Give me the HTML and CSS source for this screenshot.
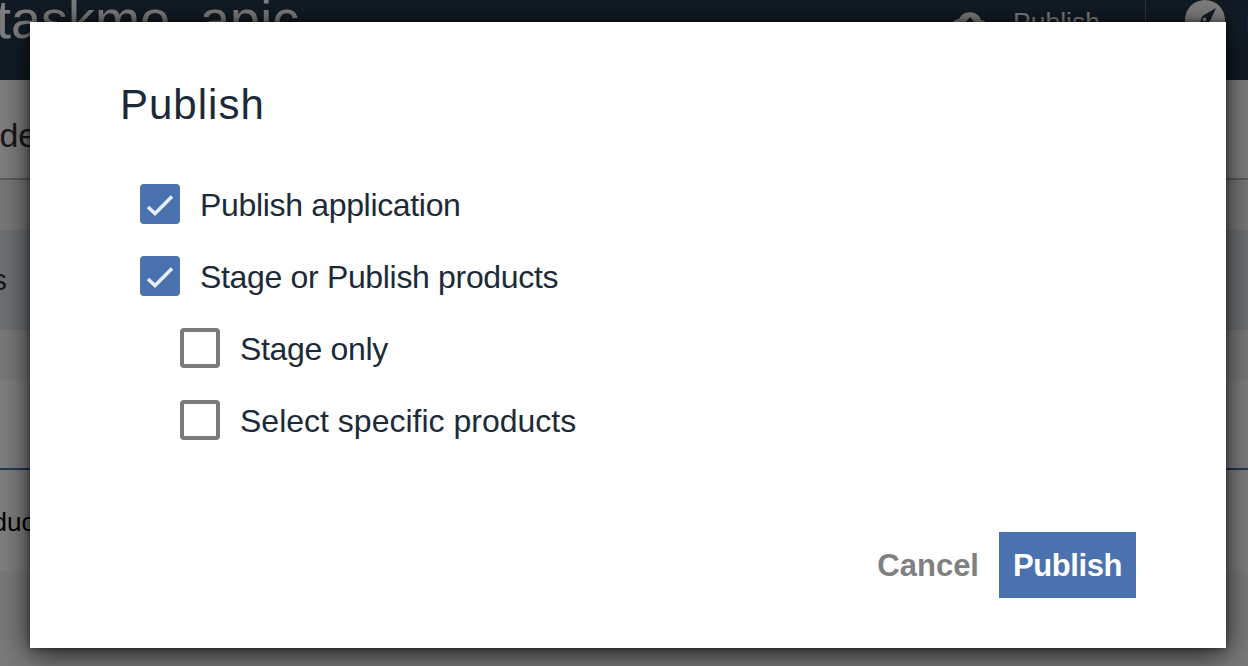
FILE: index.html
```html
<!DOCTYPE html>
<html>
<head>
<meta charset="utf-8"/>
<title>Publish</title>
<link rel="stylesheet" href="styles.css">
</head>
<body>

<div class="page">
  <header class="topbar">
    <span class="app-name">taskmo_apic</span>
    <div class="top-actions">
      <span class="top-action">
        <svg class="cloud" width="38" height="28" viewBox="0 0 38 28"><path d="M9 27a8.500 8.500 0 0 1-1-17 12 12 0 0 1 22 1 8 8 0 0 1-1 16z" fill="#fff"/><path d="M19 8l-6 7h4v12h4V15h4z" fill="#24364a"/></svg>
        <span>Publish</span>
      </span>
      <span class="top-sep"></span>
      <span class="compass">
        <svg width="40" height="40" viewBox="0 0 40 40"><circle cx="20" cy="20" r="20" fill="#fff"/><path d="M31 8 19 15c-2 1-3 3-3 5l-3 8 9-5c2-1 3-2 4-4z" fill="#24364a"/><circle cx="19.500" cy="19.500" r="2" fill="#fff"/></svg>
      </span>
      <span class="top-user">Log</span>
    </div>
  </header>
  <div class="row row-tabs"><span class="row-text tab-text">Code</span></div>
  <div class="row row-a"></div>
  <div class="row row-selected"><span class="row-text">Assets</span></div>
  <div class="row row-b"></div>
  <div class="row row-c"></div>
  <div class="row row-d"><span class="row-text dark-text">Products</span></div>
  <div class="row row-e"></div>
</div>

<div class="overlay"></div>

<div class="modal">
  <h1 class="modal-title">Publish</h1>
  <div class="options">
    <label class="option">
      <span class="box checked"><svg width="40" height="40" viewBox="0 0 40 40"><path d="M8 23l7 6.500L32 12.500" fill="none" stroke="#e8eff8" stroke-width="3.500"/></svg></span>
      <span class="option-label">Publish application</span>
    </label>
    <label class="option">
      <span class="box checked"><svg width="40" height="40" viewBox="0 0 40 40"><path d="M8 23l7 6.500L32 12.500" fill="none" stroke="#e8eff8" stroke-width="3.500"/></svg></span>
      <span class="option-label">Stage or Publish products</span>
    </label>
    <label class="option sub">
      <span class="box"></span>
      <span class="option-label">Stage only</span>
    </label>
    <label class="option sub">
      <span class="box"></span>
      <span class="option-label wide">Select specific products</span>
    </label>
  </div>
  <div class="modal-actions">
    <button class="btn-cancel">Cancel</button>
    <button class="btn-primary">Publish</button>
  </div>
</div>

</body>
</html>
```

FILE: styles.css
```css
html, body {
   margin: 0;
   height: 666px;
   overflow: hidden;
   font-family: "Liberation Sans", Arial, sans-serif;
}

.page {
   height: 666px;
   background-color: #fff;
}

.topbar {
   height: 80px;
   background-color: #24364a;
   display: flex;
   justify-content: space-between;
   color: #fff;
   overflow: hidden;
}

.app-name {
   font-size: 54px;
   line-height: 54px;
   margin-left: -4px;
   margin-top: -8px;
}

.top-actions {
   display: flex;
   align-items: flex-start;
}

.top-action {
   display: flex;
   gap: 24px;
   font-size: 26.500px;
   margin-top: 7px;
   margin-right: 45px;
}

.cloud {
   margin-top: 2px;
}

.top-sep {
   width: 1px;
   height: 60px;
   margin-right: 39px;
   background-color: #667;
}

.compass {
   margin-right: 21px;
}

.top-user {
   width: 2px;
   margin-top: 7px;
   font-size: 26px;
   white-space: nowrap;
}

.row {
   box-sizing: border-box;
   overflow: hidden;
   display: flex;
   align-items: center;
}

.row-text {
   font-size: 30px;
   color: #333;
   white-space: nowrap;
}

.row-tabs {
   height: 100px;
   border-bottom: 2px solid #bbb;
}

.tab-text {
   font-size: 34px;
   margin-left: -44px;
   margin-top: 12px;
}

.row-a {
   height: 50px;
   background-color: #f2f2f2;
}

.row-selected {
   height: 100px;
   background-color: #dde3ea;
}

.row-selected .row-text {
   margin-left: -83px;
}

.row-b {
   height: 50px;
   background-color: #f5f5f5;
}

.row-c {
   height: 90px;
   background-color: #fff;
   border-bottom: 2px solid #4a72ae;
}

.row-d {
   height: 101px;
   background-color: #fff;
}

.row .dark-text {
   color: #000;
   font-size: 26px;
   margin-left: -48px;
   margin-top: 4px;
}

.row-e {
   height: 95px;
   background-color: #f5f5f5;
}

.overlay {
   position: absolute;
   left: 0;
   top: 0;
   width: 1248px;
   height: 666px;
   background-color: rgba(0, 0, 0, 0.5);
}

.modal {
   position: absolute;
   left: 30px;
   top: 22px;
   width: 1196px;
   height: 626px;
   box-sizing: border-box;
   padding: 57px 90px 50px;
   display: flex;
   flex-direction: column;
   background-color: #fff;
   box-shadow: 0 6px 30px rgba(0, 0, 0, 0.75), 0 0 6px rgba(0, 0, 0, 0.5);
   color: #1c2a38;
}

.modal-title {
   margin: 0;
   font-size: 42px;
   line-height: 52px;
   font-weight: normal;
   letter-spacing: 1px;
}

.options {
   margin-top: 53px;
   margin-left: 20px;
   display: flex;
   flex-direction: column;
   gap: 32px;
}

.option {
   display: flex;
   align-items: center;
   gap: 20px;
   height: 40px;
   font-size: 32px;
}

.option.sub {
   margin-left: 40px;
}

.option-label {
   padding-top: 2px;
   letter-spacing: -0.33px;
}

.option-label.wide {
   letter-spacing: 0;
}

.box {
   box-sizing: border-box;
   width: 40px;
   height: 40px;
   border: 4px solid #7a7a7a;
   border-radius: 4px;
}

.box.checked {
   border: none;
   background-color: #4a72ae;
}

.box svg {
   display: block;
}

.modal-actions {
   margin-top: auto;
   display: flex;
   justify-content: flex-end;
   align-items: center;
   gap: 20px;
}

.modal-actions button {
   font-family: "Liberation Sans", Arial, sans-serif;
   font-size: 31px;
   font-weight: bold;
   border: none;
   padding: 2px 0 0;
}

.btn-cancel {
   background: none;
   color: #808080;
}

.btn-primary {
   width: 137px;
   height: 66px;
   background-color: #4a72ae;
   color: #fff;
   letter-spacing: -0.4px;
}
```
